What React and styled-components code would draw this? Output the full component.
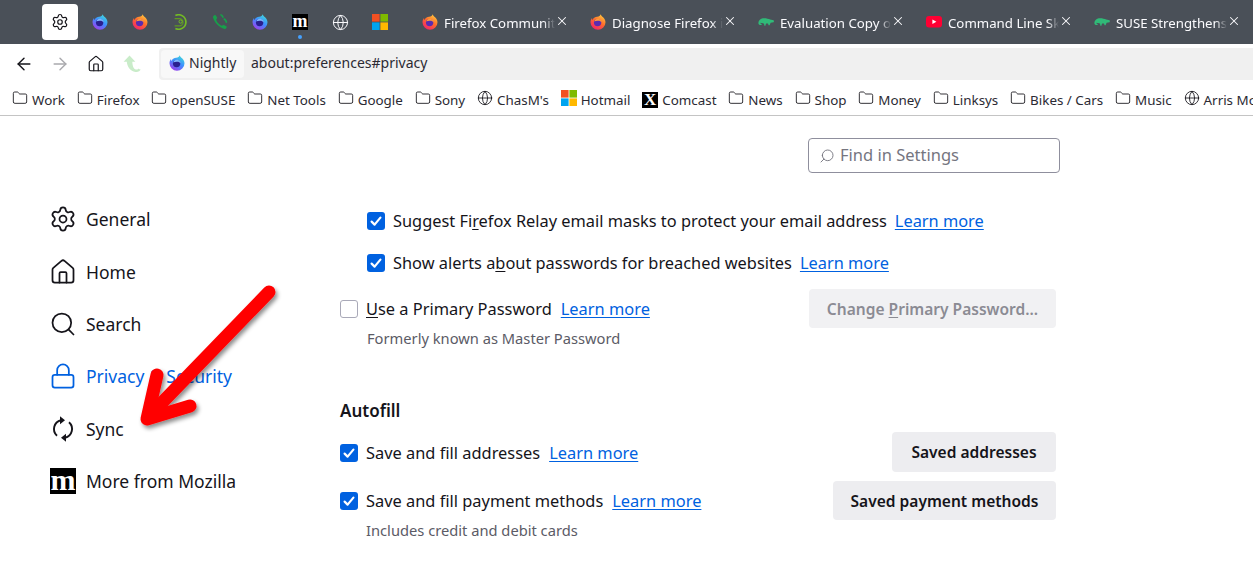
import React from 'react'
import styled, { createGlobalStyle } from 'styled-components'
import { ArrowLeft, ArrowRight, Folder, Globe, Home, Lock, Search, Settings, X } from 'lucide-react'

const GlobalStyle = createGlobalStyle`
  html, body {
    margin: 0;
    padding: 0;
    background: #fff;
    overflow: hidden;
  }
  body {
    font-family: "Noto Sans", "Open Sans", sans-serif;
    color: #15141a;
  }
`

const Wrap = styled.div`
  position: relative;
  width: 1253px;
  height: 568px;
  overflow: hidden;
  background: #fff;
`

/* ---------- browser chrome ---------- */

const TabBar = styled.div`
  height: 44px;
  background: #4a5058;
  display: flex;
  align-items: center;
  padding-left: 42px;
`
const Pinned = styled.div`
  position: relative;
  width: ${p => (p.$active ? '36px' : '40px')};
  margin-right: ${p => (p.$active ? '2px' : '0')};
  height: 36px;
  display: flex;
  align-items: center;
  justify-content: center;
  border-radius: 4px;
  background: ${p => (p.$active ? '#fff' : 'transparent')};
  color: ${p => (p.$active ? '#15141a' : '#fbfbfe')};
`
const AttentionDot = styled.span`
  position: absolute;
  left: 18px;
  bottom: 1px;
  width: 4px;
  height: 4px;
  border-radius: 50%;
  background: #45a1ff;
`
const Tab = styled.div`
  width: 168px;
  flex: none;
  display: flex;
  align-items: center;
  height: 36px;
  padding-left: 14px;
  color: #fbfbfe;
  font-size: 13.25px;
  box-sizing: border-box;
`
const TabIcon = styled.span`
  width: 16px;
  height: 16px;
  display: flex;
  align-items: center;
  justify-content: center;
  margin-right: 6px;
  flex: none;
`
const TabTitle = styled.span`
  width: 111px;
  overflow: hidden;
  white-space: nowrap;
  padding-top: 2px;
  -webkit-mask-image: linear-gradient(to right, #000 90%, transparent 100%);
  mask-image: linear-gradient(to right, #000 90%, transparent 100%);
`
const TabClose = styled.span`
  display: flex;
  margin-top: -3px;
  color: #fbfbfe;
`
const TabGap = styled.div`
  width: ${p => p.$w}px;
  flex: none;
`
const NavBar = styled.div`
  height: 36px;
  display: flex;
  align-items: flex-start;
  padding-top: 4px;
  box-sizing: border-box;
  background: #fff;
`
const NavButtons = styled.div`
  width: 159px;
  height: 32px;
  flex: none;
  padding-left: 6px;
  box-sizing: border-box;
  display: flex;
  align-items: center;
`
const NavButton = styled.span`
  width: 36px;
  display: flex;
  justify-content: center;
  color: ${p => (p.$muted ? '#a9a9ad' : '#15141a')};
`
const UrlBar = styled.div`
  flex: 1;
  height: 32px;
  box-sizing: border-box;
  background: #f0f0f0;
  border-radius: 4px 0 0 4px;
  display: flex;
  align-items: center;
  padding: 0 0 0 2px;
  font-size: 14px;
  line-height: 18px;
  color: #2b2a33;
`
const Identity = styled.div`
  width: 83px;
  height: 28px;
  box-sizing: border-box;
  padding: 0 0 2px 8px;
  background: #f8f8f8;
  border-radius: 4px;
  display: flex;
  align-items: center;
  gap: 4px;
  margin-right: 7px;
`
const UrlText = styled.span`
  padding-bottom: 2px;
`
const BookmarkBar = styled.div`
  height: 36px;
  box-sizing: border-box;
  border-bottom: 1px solid #c4c4c4;
  display: flex;
  align-items: center;
  padding-left: 12px;
  gap: 11.8px;
  white-space: nowrap;
  overflow: hidden;
  font-size: 13.4px;
  color: #2b2a33;
`
const Bookmark = styled.div`
  display: flex;
  align-items: center;
  gap: 4px;
  flex: none;
  padding-top: 4px;
  svg {
    margin-top: -3px;
  }
`
const BlackTile = styled.span`
  width: ${p => p.$size}px;
  height: ${p => p.$size}px;
  box-sizing: border-box;
  padding-bottom: ${p => p.$lift || 0}px;
  background: #000;
  color: #fff;
  display: flex;
  align-items: center;
  justify-content: center;
  font-family: "Liberation Serif", serif;
  font-weight: 700;
  font-size: ${p => p.$font}px;
  line-height: 1;
  flex: none;
  overflow: hidden;
`

/* ---------- settings page ---------- */

const Page = styled.div`
  display: flex;
`
const Sidebar = styled.nav`
  width: 340px;
  flex: none;
  box-sizing: border-box;
  padding: 77px 0 0 50px;
`
const NavItem = styled.div`
  height: 52.4px;
  display: flex;
  align-items: center;
  gap: 10px;
  font-size: 17.5px;
  color: ${p => (p.$active ? '#0061e0' : '#15141a')};
  svg {
    flex: none;
  }
`
const IconSlot = styled.span`
  width: 26px;
  height: 26px;
  display: flex;
  align-items: center;
  justify-content: center;
  flex: none;
`
const Main = styled.main`
  width: 716px;
  padding-top: 22px;
  display: flex;
  flex-direction: column;
`
const SearchBox = styled.div`
  align-self: flex-end;
  width: 252px;
  height: 35px;
  margin-right: -4px;
  box-sizing: border-box;
  border: 1px solid #8f8f9d;
  border-radius: 4px;
  display: flex;
  align-items: center;
  gap: 5px;
  padding: 0 0 2px 10px;
  color: #75757f;
  font-size: 16.5px;
  svg {
    transform: scaleX(-1);
    margin-top: 2px;
  }
`
const Row = styled.div`
  display: flex;
  align-items: center;
  justify-content: space-between;
  height: ${p => p.$h || 24}px;
  margin-top: ${p => p.$top}px;
  padding-left: ${p => (p.$indent ? '27px' : '0')};
  font-size: ${p => (p.$indent ? '16.36px' : '16.4px')};
`
const CheckLabel = styled.div`
  display: flex;
  align-items: center;
  white-space: nowrap;
  padding-top: ${p => p.$nudge || 0}px;
`
const Box = styled.span`
  width: 18px;
  height: 18px;
  box-sizing: border-box;
  border-radius: 3px;
  margin-right: 8px;
  flex: none;
  display: flex;
  align-items: center;
  justify-content: center;
  background: ${p => (p.$checked ? '#0061e0' : '#fff')};
  border: ${p => (p.$checked ? 'none' : '1px solid #a9a9b8')};
`
const Label = styled.span`
  margin-bottom: ${p => (p.$lift ? '1px' : '0')};
`
const Key = styled.span`
  text-decoration: underline;
  text-underline-offset: 2px;
`
const LearnMore = styled.a`
  color: #0061e0;
  text-decoration: underline;
  text-underline-offset: 2px;
  margin-left: ${p => (p.$lift ? '8px' : '9px')};
  margin-bottom: ${p => (p.$lift ? '1px' : '0')};
`
const SubText = styled.div`
  margin: 0 0 0 ${p => p.$left}px;
  height: 21px;
  line-height: 20px;
  font-size: 14.7px;
  color: #5b5b66;
`
const Heading = styled.h2`
  margin: 50px 0 0;
  height: 24px;
  line-height: 24px;
  font-size: 17px;
  font-weight: 600;
`
const Button = styled.div`
  height: 100%;
  box-sizing: border-box;
  border-radius: 4px;
  display: flex;
  align-items: center;
  justify-content: center;
  width: ${p => p.$w}px;
  flex: none;
  font-weight: 600;
  font-size: 15.55px;
  color: ${p => (p.$disabled ? '#8b8b93' : '#15141a')};
  background: ${p => (p.$disabled ? '#f1f1f3' : '#ededf0')};
`
const ArrowOverlay = styled.svg`
  position: absolute;
  left: 0;
  top: 0;
  pointer-events: none;
`

/* ---------- drawn icons ---------- */

const Fox = ({ id, size = 16, kind = 'nightly' }) => {
  const colors =
    kind === 'nightly'
      ? ['#3fe1d6', '#3f8dff', '#a23bea']
      : ['#ffd33f', '#ff6a2b', '#f0206f']
  const core = kind === 'nightly' ? '#2a1f8f' : '#5a2bb0'
  const swirl = kind === 'nightly' ? '#7fb8ff' : '#ff9a3c'
  return (
    <svg width={size} height={size} viewBox="0 0 16 16">
      <defs>
        <linearGradient id={id} x1="0.85" y1="0" x2="0.25" y2="1">
          <stop offset="0" stopColor={colors[0]} />
          <stop offset="0.5" stopColor={colors[1]} />
          <stop offset="1" stopColor={colors[2]} />
        </linearGradient>
      </defs>
      <path
        d="M10.8 0.2c0.2 1.3 1.1 2 2 2.9 1.4 1.4 2.7 3 2.7 5.2a7.5 7.5 0 1 1-15 0c0-1.6 0.5-3.1 1.5-4.3 0 0.9 0.3 1.5 0.7 1.9 0.5-1.5 1.6-2.5 3-2.9 1.8-0.5 4-0.3 5.1-2.8z"
        fill={`url(#${id})`}
      />
      <circle cx="7.6" cy="8.6" r="3.7" fill={core} />
      <path d="M4.2 7.4c1-2.4 3.4-3 5.4-2.2 1.4 0.6 2 1.8 2 3.2-1-1.4-2.6-2-4-1.6-1.3 0.3-2.4 0.4-3.4 0.6z" fill={swirl} />
    </svg>
  )
}

const SuseRing = () => (
  <svg width="16" height="16" viewBox="0 0 16 16" fill="none">
    <path d="M3.4 1.6A7.2 7.2 0 1 1 3.4 14.4" stroke="#73ba25" strokeWidth="1.7" />
    <path d="M2.6 4.6h4.8a3.6 3.6 0 0 1 0 7.2H2.6" stroke="#5f9a20" strokeWidth="1.2" />
    <circle cx="8.6" cy="7.6" r="1.6" stroke="#73ba25" strokeWidth="1" />
  </svg>
)

const GreenPhones = () => (
  <svg width="16" height="16" viewBox="0 0 16 16" fill="#17a04a">
    <path d="M1 3.2C.8 2.2 2.6.6 3.6 1.2l1.6 2.4c.3.5-1 1.6-1 2.2.4 2.2 3.4 5.4 5.8 6 .5 0 1.4-1.2 2-.9l2.6 1.6c.7.6-.8 2.7-2 2.4C7.2 13.6 2.2 8.4 1 3.2z" />
    <path d="M8 .8c0-.5.6-.8 1.2-.6 1 .3 2.3 1.4 2.5 2.7.1.8-.7 1.2-1.3.8-.5-.3-.4-1-.9-1.5C9 1.700 8 1.700 8 .8z" />
    <path d="M11.4 4.800c.5-.4 1.300-.8 1.700-.3 1.100 1.100 2 2.400 2.100 3.600 0 .9-1 1.300-1.500.7-.4-.5-.4-1.300-1-2-.5-.6-1.700-1.200-1.300-2z" />
  </svg>
)

const WinLogo = ({ size = 16 }) => (
  <svg width={size} height={size} viewBox="0 0 16 16">
    <rect x="0" y="0" width="7.6" height="7.6" fill="#f25022" />
    <rect x="8.4" y="0" width="7.6" height="7.6" fill="#7fba00" />
    <rect x="0" y="8.4" width="7.6" height="7.6" fill="#00a4ef" />
    <rect x="8.4" y="8.4" width="7.6" height="7.6" fill="#ffb900" />
  </svg>
)

const Gecko = () => (
  <svg width="16" height="10" viewBox="0 0 16 10" fill="#30ba78">
    <path d="M0.4 6.2C0.6 3 3 1.2 6 1.2c2.6 0 4.6.6 6.2 1.4l3.4.6c.4.6.4 1.4 0 2l-3 .6-1 2.4h-1L10 6.4 8 6.6 7.4 8.8h-1L6 6.6C4.4 6.4 3.4 6 2.6 5.8c-.2 1 .4 1.4 1 1.2l.2.8c-1.8.6-3.4-.2-3.4-1.6z" />
  </svg>
)

const YouTube = () => (
  <svg width="16" height="12" viewBox="0 0 16 12">
    <rect width="16" height="11.4" rx="3" fill="#ff0033" />
    <path d="M6.4 3.4v4.6l4-2.3z" fill="#fff" />
  </svg>
)

const GreenArrow = () => (
  <svg width="18" height="18" viewBox="0 0 18 18">
    <path d="M6.5 .5 .6 6.8h3.2c.3 5 3.7 9.4 8.6 10.200 2.400.4 4.600-.6 5.200-2.400-1-.1-1.600-.5-2-1.200-.5 1-1.600 1.400-3 1-1.800-.5-3-2.600-3.300-7.600h3.100z" fill="#c9ecc9" />
  </svg>
)

const SyncIcon = () => (
  <svg width="26" height="26" viewBox="0 0 26 26" fill="none" stroke="#15141a" strokeWidth="1.9">
    <path d="M11 4.2A9 9 0 0 0 7 19.7" />
    <path d="M15 21.8A9 9 0 0 0 19 6.3" />
    <path d="M10 .2v8l5-4z" fill="#15141a" stroke="none" />
    <path d="M16 25.8v-8l-5 4z" fill="#15141a" stroke="none" />
  </svg>
)

const CheckMark = () => (
  <svg width="12" height="12" viewBox="0 0 12 12" fill="none" stroke="#fff" strokeWidth="2.2" strokeLinecap="round" strokeLinejoin="round">
    <path d="M1.6 6.6 4.6 9.6 10.4 2.6" />
  </svg>
)

/* ---------- data ---------- */

const pinned = [
  { key: 'p1', icon: <Fox id="pin1" kind="nightly" /> },
  { key: 'p2', icon: <Fox id="pin2" kind="firefox" /> },
  { key: 'p3', icon: <SuseRing /> },
  { key: 'p4', icon: <GreenPhones /> },
  { key: 'p5', icon: <Fox id="pin5" kind="nightly" /> },
  { key: 'p6', icon: <BlackTile $size={16} $font={18} $lift={2}>m</BlackTile>, dot: true },
  { key: 'p7', icon: <Globe size={17} strokeWidth={1.4} /> },
  { key: 'p8', icon: <WinLogo /> },
]

const tabs = [
  { title: 'Firefox Community', icon: <Fox id="tab1" kind="firefox" /> },
  { title: 'Diagnose Firefox issues', icon: <Fox id="tab2" kind="firefox" /> },
  { title: 'Evaluation Copy of', icon: <Gecko /> },
  { title: 'Command Line Skills', icon: <YouTube /> },
  { title: 'SUSE Strengthens', icon: <Gecko /> },
]

const bookmarks = [
  ['Work', 'folder'],
  ['Firefox', 'folder'],
  ['openSUSE', 'folder'],
  ['Net Tools', 'folder'],
  ['Google', 'folder'],
  ['Sony', 'folder'],
  ["ChasM's", 'globe'],
  ['Hotmail', 'win'],
  ['Comcast', 'x'],
  ['News', 'folder'],
  ['Shop', 'folder'],
  ['Money', 'folder'],
  ['Linksys', 'folder'],
  ['Bikes / Cars', 'folder'],
  ['Music', 'folder'],
  ['Arris Modem', 'globe'],
]

const bookmarkIcon = type => {
  if (type === 'globe') return <Globe size={16} strokeWidth={1.3} color="#15141a" />
  if (type === 'win') return <WinLogo size={16} />
  if (type === 'x') return <BlackTile $size={16} $font={17}>X</BlackTile>
  return <Folder size={16} strokeWidth={1.3} color="#15141a" />
}

const Check = ({ checked }) => (
  <Box $checked={checked}>
    {checked && <CheckMark />}
  </Box>
)

export default function App() {
  return (
    <Wrap>
      <GlobalStyle />
      <TabBar>
        <Pinned $active>
          <Settings size={18} strokeWidth={1.6} />
        </Pinned>
        {pinned.map(p => (
          <Pinned key={p.key}>
            {p.icon}
            {p.dot && <AttentionDot />}
          </Pinned>
        ))}
        <TabGap $w={8} />
        {tabs.map(t => (
          <Tab key={t.title}>
            <TabIcon>{t.icon}</TabIcon>
            <TabTitle>{t.title}</TabTitle>
            <TabClose><X size={14} strokeWidth={1.8} /></TabClose>
          </Tab>
        ))}
      </TabBar>

      <NavBar>
        <NavButtons>
          <NavButton><ArrowLeft size={20} strokeWidth={1.7} /></NavButton>
          <NavButton $muted><ArrowRight size={20} strokeWidth={1.7} /></NavButton>
          <NavButton><Home size={18} strokeWidth={1.6} /></NavButton>
          <NavButton><GreenArrow /></NavButton>
        </NavButtons>
        <UrlBar>
          <Identity>
            <Fox id="urlfox" kind="nightly" />
            Nightly
          </Identity>
          <UrlText>about:preferences#privacy</UrlText>
        </UrlBar>
      </NavBar>

      <BookmarkBar>
        {bookmarks.map(([label, type]) => (
          <Bookmark key={label}>
            {bookmarkIcon(type)}
            {label}
          </Bookmark>
        ))}
      </BookmarkBar>

      <Page>
        <Sidebar>
          <NavItem><IconSlot><Settings size={28} strokeWidth={1.5} /></IconSlot>General</NavItem>
          <NavItem><IconSlot><Home size={28} strokeWidth={1.5} /></IconSlot>Home</NavItem>
          <NavItem><IconSlot><Search size={28} strokeWidth={1.5} /></IconSlot>Search</NavItem>
          <NavItem $active><IconSlot><Lock size={28} strokeWidth={1.5} /></IconSlot>Privacy &amp; Security</NavItem>
          <NavItem><IconSlot><SyncIcon /></IconSlot>Sync</NavItem>
          <NavItem><BlackTile $size={26} $font={30} $lift={3}>m</BlackTile>More from Mozilla</NavItem>
        </Sidebar>

        <Main>
          <SearchBox>
            <Search size={16} strokeWidth={1.4} />
            Find in Settings
          </SearchBox>

          <Row $top={36} $indent>
            <CheckLabel>
              <Check checked />
              <Label $lift>Suggest Fi<Key>r</Key>efox Relay email masks to protect your email address</Label>
              <LearnMore $lift>Learn more</LearnMore>
            </CheckLabel>
          </Row>
          <Row $top={18} $indent>
            <CheckLabel>
              <Check checked />
              <Label $lift>Show alerts a<Key>b</Key>out passwords for breached websites</Label>
              <LearnMore $lift>Learn more</LearnMore>
            </CheckLabel>
          </Row>
          <Row $top={14} $h={39}>
            <CheckLabel>
              <Check />
              <Label><Key>U</Key>se a Primary Password</Label>
              <LearnMore>Learn more</LearnMore>
            </CheckLabel>
            <Button $w={247} $disabled>Change&nbsp;<Key>P</Key>rimary Password...</Button>
          </Row>
          <SubText $left={27}>Formerly known as Master Password</SubText>

          <Heading>Autofill</Heading>
          <Row $top={9} $h={40}>
            <CheckLabel $nudge={1}>
              <Check checked />
              <Label>Save and fill addresses</Label>
              <LearnMore>Learn more</LearnMore>
            </CheckLabel>
            <Button $w={164}>Saved addresses</Button>
          </Row>
          <Row $top={9} $h={39}>
            <CheckLabel>
              <Check checked />
              <Label>Save and fill payment methods</Label>
              <LearnMore>Learn more</LearnMore>
            </CheckLabel>
            <Button $w={223}>Saved payment methods</Button>
          </Row>
          <SubText $left={26}>Includes credit and debit cards</SubText>
        </Main>
      </Page>

      <ArrowOverlay width="1253" height="568" viewBox="0 0 1253 568" fill="none">
        <defs>
          <filter id="arrowShadow" x="-20%" y="-20%" width="140%" height="140%">
            <feDropShadow dx="2" dy="3" stdDeviation="2" floodColor="#000" floodOpacity="0.45" />
          </filter>
        </defs>
        <g filter="url(#arrowShadow)" stroke="#ff0000" strokeWidth="13" strokeLinecap="round" strokeLinejoin="round">
          <path d="M269 292 152 413" />
          <path d="M157 375 147 419 190 406" />
        </g>
      </ArrowOverlay>
    </Wrap>
  )
}
